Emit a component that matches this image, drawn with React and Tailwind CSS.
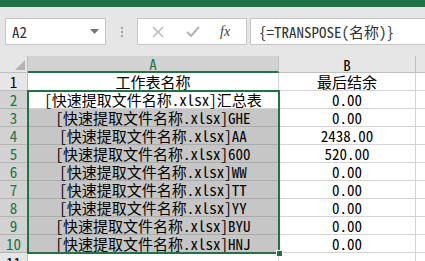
const ROWS = [
  ['[快速提取文件名称.xlsx]汇总表', '0.00'],
  ['[快速提取文件名称.xlsx]GHE', '0.00'],
  ['[快速提取文件名称.xlsx]AA', '2438.00'],
  ['[快速提取文件名称.xlsx]600', '520.00'],
  ['[快速提取文件名称.xlsx]WW', '0.00'],
  ['[快速提取文件名称.xlsx]TT', '0.00'],
  ['[快速提取文件名称.xlsx]YY', '0.00'],
  ['[快速提取文件名称.xlsx]BYU', '0.00'],
  ['[快速提取文件名称.xlsx]HNJ', '0.00'],
];

const FONT = { fontFamily: '"Noto Sans Mono CJK SC", "Noto Sans CJK SC", monospace' };

export default function App() {
  return (
    <div className="relative w-[425px] h-[261px] overflow-hidden bg-white text-[15px] leading-none text-black" style={FONT}>
      <div className="h-[7px] bg-[#217346]" />

      {/* formula bar */}
      <div className="h-[49px] bg-[#e6e6e6] flex items-start pt-[11px] pl-[5px]">
        <div className="w-[101px] h-[27px] bg-white border border-[#c6c6c6] flex items-center justify-between pl-[6px] pr-[6px]">
          <span className="text-[#333]">A2</span>
          <svg width="9" height="5" viewBox="0 0 9 5"><path d="M0 0h9L4.5 5z" fill="#777" /></svg>
        </div>
        <div className="w-[31px] h-[27px] flex flex-col items-center justify-center gap-[2px]">
          <div className="w-[2px] h-[2px] bg-[#a0a0a0]" />
          <div className="w-[2px] h-[2px] bg-[#a0a0a0]" />
          <div className="w-[2px] h-[2px] bg-[#a0a0a0]" />
        </div>
        <div className="w-[110px] h-[27px] bg-white border border-[#c6c6c6] flex items-center">
          <svg className="ml-[14px]" width="12" height="12" viewBox="0 0 12 12">
            <path d="M1 1l10 10M11 1L1 11" stroke="#b4b4b4" strokeWidth="1.4" />
          </svg>
          <svg className="ml-[22px]" width="14" height="11" viewBox="0 0 14 11">
            <path d="M1 6l4 4 8-9" stroke="#b4b4b4" strokeWidth="2" fill="none" />
          </svg>
          <span className="ml-[20px] text-[14px] italic text-[#444]" style={{ fontFamily: '"Liberation Serif", serif' }}>fx</span>
        </div>
        <div className="ml-[3px] flex-1 h-[27px] bg-white border border-r-0 border-[#c6c6c6] flex items-center pl-[8px] text-[#333]">
          {'{=TRANSPOSE(名称)}'}
        </div>
      </div>

      {/* column headers */}
      <div className="flex h-[17px]">
        <div className="w-[28px] bg-[#e6e6e6] border-r border-b border-[#bfbfbf] flex items-end justify-end p-[2px]">
          <svg width="10" height="10" viewBox="0 0 10 10"><path d="M10 0v10H0z" fill="#b4b4b4" /></svg>
        </div>
        <div className="w-[251px] bg-[#d2d2d2] border-r border-[#bfbfbf] border-b-2 border-b-[#217346] flex items-center justify-center text-[#217346]">A</div>
        <div className="w-[137px] bg-[#e6e6e6] border-r border-b border-[#bfbfbf] flex items-center justify-center">B</div>
        <div className="flex-1 bg-[#e6e6e6] border-b border-[#bfbfbf]" />
      </div>

      {/* row 1 */}
      <div className="flex h-[18px]">
        <div className="w-[28px] bg-[#e6e6e6] border-r border-b border-[#bfbfbf] flex items-center justify-center">1</div>
        <div className="w-[251px] border-r border-b border-[#d4d4d4] flex items-center justify-center">工作表名称</div>
        <div className="w-[137px] border-r border-b border-[#d4d4d4] flex items-center justify-center">最后结余</div>
        <div className="flex-1 border-b border-[#d4d4d4]" />
      </div>

      {ROWS.map(([name, val], i) => (
        <div key={i} className="flex h-[18px]">
          <div className="w-[28px] bg-[#d2d2d2] border-r border-b border-[#b4b4b4] flex items-center justify-center text-[#217346]">{i + 2}</div>
          <div className={`w-[251px] border-r border-b flex items-center justify-center ${i === 0 ? 'bg-white border-[#d4d4d4]' : 'bg-[#c6c6c6] border-[#ababab]'}`}>{name}</div>
          <div className="w-[137px] border-r border-b border-[#d4d4d4] flex items-center justify-center">{val}</div>
          <div className="flex-1 border-b border-[#d4d4d4]" />
        </div>
      ))}

      <div className="flex h-[18px]">
        <div className="w-[28px] bg-[#e6e6e6] border-r border-[#bfbfbf] flex items-center justify-center">11</div>
        <div className="w-[251px] border-r border-[#d4d4d4]" />
        <div className="w-[137px] border-r border-[#d4d4d4]" />
      </div>

      {/* selection */}
      <div className="absolute left-[27px] top-[90px] w-[253px] h-[164px] border-2 border-[#217346] pointer-events-none" />
      <div className="absolute left-[276px] top-[250px] w-[7px] h-[7px] bg-[#217346] border border-white" />
    </div>
  );
}
